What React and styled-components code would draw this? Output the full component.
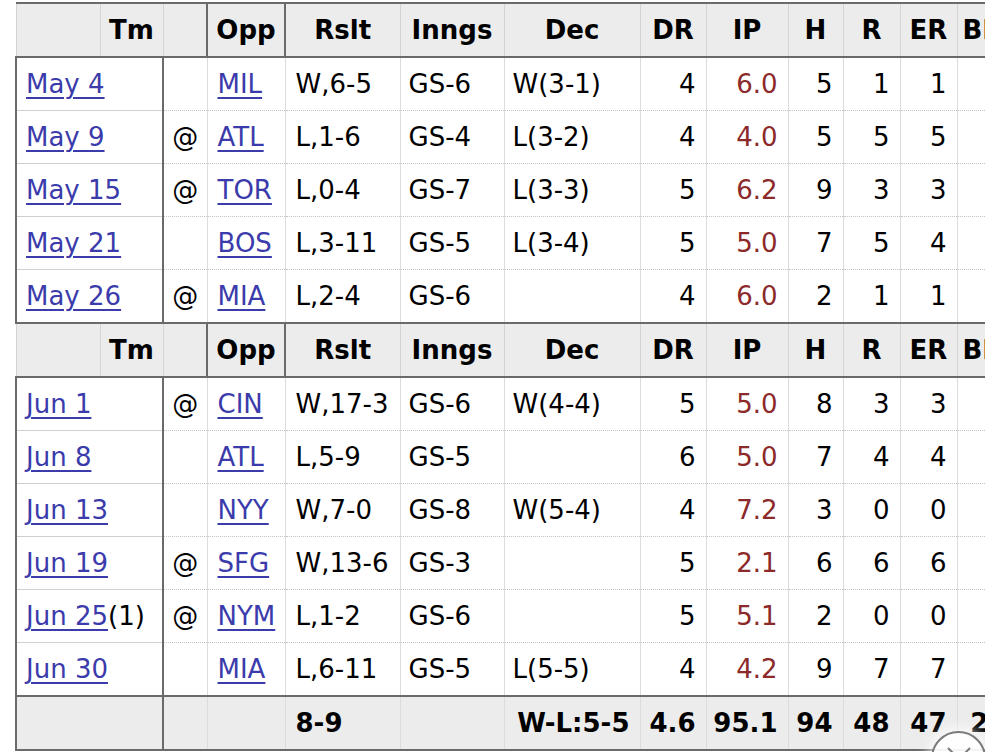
import styled, { createGlobalStyle } from "styled-components";

const GlobalStyle = createGlobalStyle`
  html, body {
    margin: 0;
    padding: 0;
    background: #fff;
    overflow: hidden;
  }
  body {
    font-family: "DejaVu Sans", Verdana, sans-serif;
  }
`;

const Page = styled.div`
  position: relative;
  width: 1000px;
  height: 752px;
  overflow: hidden;
`;

const Clip = styled.div`
  width: 985px;
  overflow: hidden;
  padding: 2px 0 0 15px;
  box-sizing: border-box;
`;

const Table = styled.table`
  border-collapse: collapse;
  table-layout: fixed;
  width: 1001px;
  font-size: 26px;
  color: #000;
`;

const HeadRow = styled.tr`
  background: #ececec;
`;

const HeadCell = styled.th`
  height: 52px;
  padding: 0 4px;
  font-weight: bold;
  text-align: center;
  white-space: nowrap;
  overflow: hidden;
  border-top: 2px solid #6a6a6a;
  border-bottom: 2px solid #6a6a6a;
  border-left: ${(p) => (p.$thick ? "2px solid #6a6a6a" : "1px solid #d4d4d4")};
  border-right: ${(p) => (p.$thick ? "2px solid #6a6a6a" : "1px solid #d4d4d4")};
`;

const Cell = styled.td`
  height: 52px;
  padding: ${(p) => (p.$align === "right" ? "0 10px 0 4px" : "0 4px 0 10px")};
  text-align: ${(p) => p.$align || "left"};
  white-space: nowrap;
  overflow: hidden;
  border-left: 1px solid #dcdcdc;
  border-right: 1px solid #dcdcdc;
  border-bottom: 1px dotted #c4c4c4;
  color: ${(p) => (p.$red ? "#8c2a2a" : "#000")};
`;

const DateCell = styled(Cell)`
  padding-left: 9px;
  border-left: 2px solid #6a6a6a;
  border-right: 2px solid #6a6a6a;
  border-bottom: 1px solid #d0d0d0;
`;

const AtCell = styled(Cell)`
  text-align: center;
  padding: 0;
`;

const FootRow = styled.tr`
  background: #ececec;
  font-weight: bold;
  td {
    border-top: 2px solid #6a6a6a;
    border-bottom: 2px solid #6a6a6a;
    border-left-style: solid;
  }
`;

const TeamLink = styled.a`
  color: #3b3bab;
  text-decoration: underline;
  text-underline-offset: 4px;
  text-decoration-thickness: 2px;
`;

const CloseButton = styled.div`
  position: absolute;
  left: 931px;
  top: 731px;
  width: 55px;
  height: 55px;
  box-sizing: border-box;
  border-radius: 50%;
  border: 2px solid #7c7c7c;
  background: rgba(255, 255, 255, 0.92);
  box-shadow: 0 0 12px 4px rgba(255, 255, 255, 0.7);
  display: flex;
  align-items: center;
  justify-content: center;
`;

const may = [
  ["May 4", "", "MIL", "W,6-5", "GS-6", "W(3-1)", "4", "6.0", "5", "1", "1"],
  ["May 9", "@", "ATL", "L,1-6", "GS-4", "L(3-2)", "4", "4.0", "5", "5", "5"],
  ["May 15", "@", "TOR", "L,0-4", "GS-7", "L(3-3)", "5", "6.2", "9", "3", "3"],
  ["May 21", "", "BOS", "L,3-11", "GS-5", "L(3-4)", "5", "5.0", "7", "5", "4"],
  ["May 26", "@", "MIA", "L,2-4", "GS-6", "", "4", "6.0", "2", "1", "1"],
];

const jun = [
  ["Jun 1", "@", "CIN", "W,17-3", "GS-6", "W(4-4)", "5", "5.0", "8", "3", "3"],
  ["Jun 8", "", "ATL", "L,5-9", "GS-5", "", "6", "5.0", "7", "4", "4"],
  ["Jun 13", "", "NYY", "W,7-0", "GS-8", "W(5-4)", "4", "7.2", "3", "0", "0"],
  ["Jun 19", "@", "SFG", "W,13-6", "GS-3", "", "5", "2.1", "6", "6", "6"],
  ["Jun 25", "@", "NYM", "L,1-2", "GS-6", "", "5", "5.1", "2", "0", "0", "(1)"],
  ["Jun 30", "", "MIA", "L,6-11", "GS-5", "L(5-5)", "4", "4.2", "9", "7", "7"],
];

const widths = [84, 63, 44, 78, 115, 104, 136, 66, 82, 55, 57, 57, 60];

const Header = () => (
  <HeadRow>
    <HeadCell />
    <HeadCell>Tm</HeadCell>
    <HeadCell />
    <HeadCell $thick>Opp</HeadCell>
    <HeadCell>Rslt</HeadCell>
    <HeadCell>Inngs</HeadCell>
    <HeadCell>Dec</HeadCell>
    <HeadCell>DR</HeadCell>
    <HeadCell>IP</HeadCell>
    <HeadCell>H</HeadCell>
    <HeadCell>R</HeadCell>
    <HeadCell>ER</HeadCell>
    <HeadCell style={{ textAlign: "left", paddingLeft: 5 }}>BB</HeadCell>
  </HeadRow>
);

const GameRow = ({ row }) => {
  const [date, at, opp, rslt, inn, dec, dr, ip, h, r, er, suffix] = row;
  return (
    <tr>
      <DateCell colSpan={2}>
        <TeamLink>{date}</TeamLink>
        {suffix}
      </DateCell>
      <AtCell>{at}</AtCell>
      <Cell>
        <TeamLink>{opp}</TeamLink>
      </Cell>
      <Cell>{rslt}</Cell>
      <Cell style={{ paddingLeft: 8 }}>{inn}</Cell>
      <Cell style={{ paddingLeft: 8 }}>{dec}</Cell>
      <Cell $align="right">{dr}</Cell>
      <Cell $align="right" $red>
        {ip}
      </Cell>
      <Cell $align="right">{h}</Cell>
      <Cell $align="right">{r}</Cell>
      <Cell $align="right">{er}</Cell>
      <Cell $align="right">1</Cell>
    </tr>
  );
};

export default function App() {
  return (
    <Page>
      <GlobalStyle />
      <Clip>
        <Table>
          <colgroup>
            {widths.map((w, i) => (
              <col key={i} style={{ width: w }} />
            ))}
          </colgroup>
          <tbody>
            <Header />
            {may.map((row) => (
              <GameRow key={row[0]} row={row} />
            ))}
            <Header />
            {jun.map((row) => (
              <GameRow key={row[0]} row={row} />
            ))}
            <FootRow>
              <DateCell colSpan={2} />
              <AtCell />
              <Cell />
              <Cell>8-9</Cell>
              <Cell />
              <Cell $align="right">W-L:5-5</Cell>
              <Cell $align="right">4.6</Cell>
              <Cell $align="right">95.1</Cell>
              <Cell $align="right">94</Cell>
              <Cell $align="right">48</Cell>
              <Cell $align="right">47</Cell>
              <Cell $align="right">25</Cell>
            </FootRow>
          </tbody>
        </Table>
      </Clip>
      <CloseButton>
        <svg width="32" height="32" viewBox="0 0 32 32">
          <path d="M5 5 L27 27 M27 5 L5 27" stroke="#7c7c7c" strokeWidth="2" fill="none" />
        </svg>
      </CloseButton>
    </Page>
  );
}
